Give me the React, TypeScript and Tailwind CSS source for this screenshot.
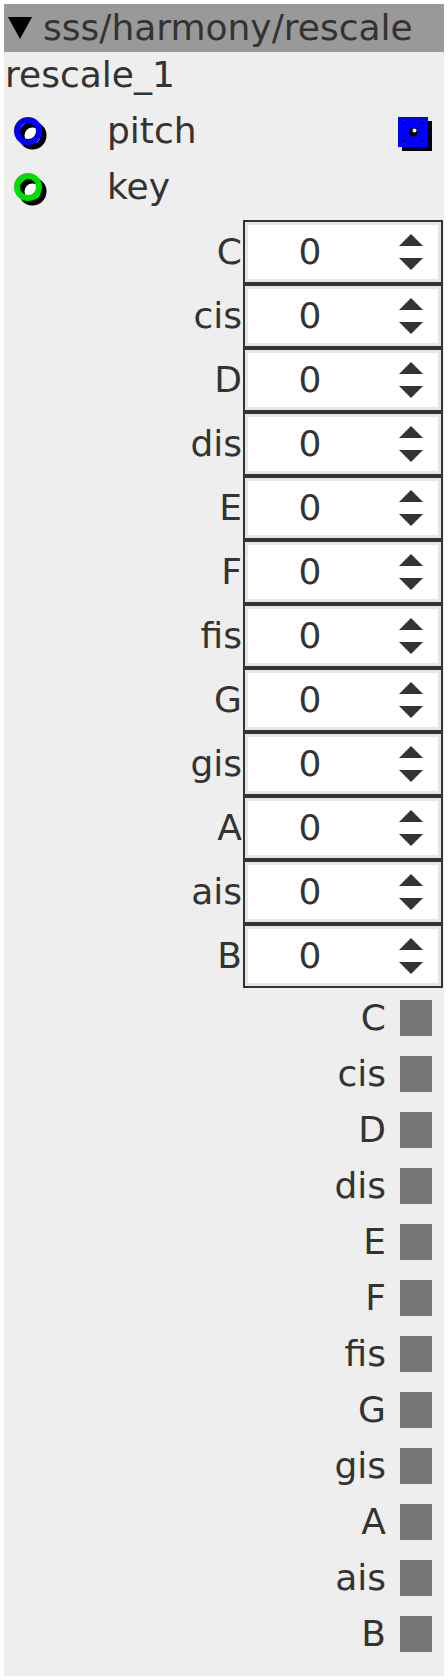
import React from "react";

const notes = ["C", "cis", "D", "dis", "E", "F", "fis", "G", "gis", "A", "ais", "B"];

const Port = ({ color }: { color: string }) => (
  <svg width="36" height="36" viewBox="0 0 36 36" className="mt-[9px] ml-[10px] shrink-0">
    <circle cx="18.5" cy="18.5" r="11" fill="#ffffff" stroke="#000000" strokeWidth="6" />
    <circle cx="14" cy="14" r="11" fill="none" stroke={color} strokeWidth="6" />
  </svg>
);

const OutBox = () => (
  <svg width="36" height="36" viewBox="0 0 36 36" className="mt-[9px] ml-auto mr-[10px] shrink-0">
    <rect x="4" y="4" width="30" height="30" fill="#000000" />
    <rect x="0" y="0" width="30" height="30" fill="#0000ff" />
    <circle cx="6" cy="6" r="1" fill="#000000" />
    <circle cx="24" cy="6" r="1" fill="#000000" />
    <circle cx="6" cy="24" r="1" fill="#000000" />
    <circle cx="24" cy="24" r="1" fill="#000000" />
    <circle cx="15" cy="15" r="4.5" fill="#000000" />
    <circle cx="16.5" cy="13.5" r="2" fill="#ffffff" />
  </svg>
);

const Spinner = () => (
  <svg width="24" height="36" viewBox="0 0 24 36" className="ml-[27px] shrink-0">
    <polygon points="0,12 12,0 24,12" fill="#333333" />
    <polygon points="0,24 24,24 12,36" fill="#333333" />
  </svg>
);

export default function App() {
  return (
    <div className="w-[448px] h-[1680px] bg-white p-[4px] font-['DejaVu_Sans',sans-serif] text-[36px] text-[#333333]">
      <div className="h-full bg-[#eeeeee]">
        {/* title bar */}
        <div className="flex h-[48px] items-center bg-[#999999] pl-[4px]">
          <svg width="24" height="22" viewBox="0 0 24 22" className="shrink-0">
            <polygon points="0,0 24,0 12,22" fill="#000000" />
          </svg>
          <span className="ml-[11px] leading-[48px]">sss/harmony/rescale</span>
        </div>

        <div className="h-[56px] pl-[1px] leading-[46px]">rescale_1</div>

        <div className="flex h-[56px] items-start">
          <Port color="#0000ff" />
          <span className="ml-[57px] leading-[46px]">pitch</span>
          <OutBox />
        </div>
        <div className="flex h-[56px] items-start">
          <Port color="#00dd00" />
          <span className="ml-[57px] leading-[46px]">key</span>
        </div>

        {/* note offsets */}
        <div className="pr-[1px]">
          {notes.map((n) => (
            <div key={n} className="flex h-[64px] items-center">
              <span className="flex-1 pr-[1px] text-right leading-none">{n}</span>
              <div className="h-[64px] w-[200px] border-2 border-[#333333] bg-[#e6e6e6] p-[3px]">
                <div className="flex h-full items-center bg-white">
                  <span className="w-[124px] text-center leading-none">0</span>
                  <Spinner />
                </div>
              </div>
            </div>
          ))}
        </div>

        {/* note toggles */}
        <div className="pt-[2px]">
          {notes.map((n) => (
            <div key={n} className="flex h-[56px] items-center justify-end pr-[12px]">
              <span className="mr-[14px] leading-none">{n}</span>
              <div className="h-[36px] w-[32px] bg-[#777777]" />
            </div>
          ))}
        </div>
      </div>
    </div>
  );
}
